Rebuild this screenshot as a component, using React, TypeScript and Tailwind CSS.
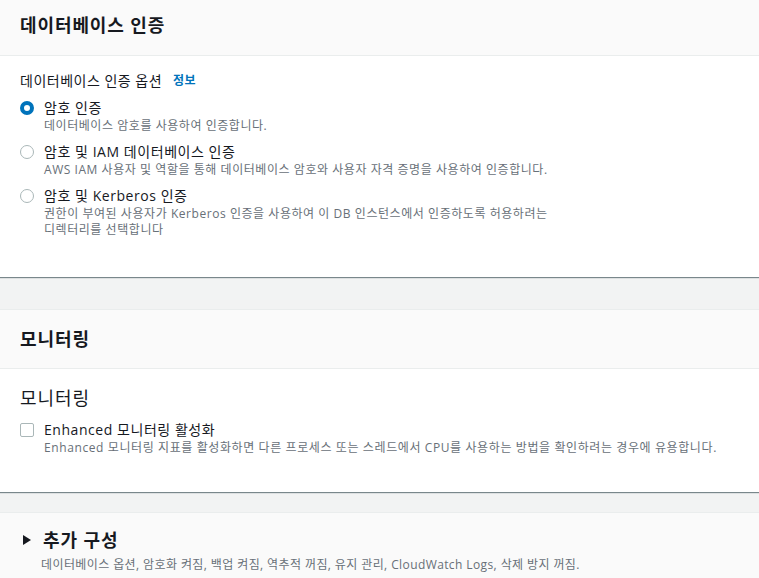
import React, { useState } from 'react';

const font = "font-['Open_Sans','Noto_Sans_CJK_KR',sans-serif]";

const options = [
  { id: 'password', label: '암호 인증', desc: ['데이터베이스 암호를 사용하여 인증합니다.'] },
  {
    id: 'iam',
    label: '암호 및 IAM 데이터베이스 인증',
    desc: ['AWS IAM 사용자 및 역할을 통해 데이터베이스 암호와 사용자 자격 증명을 사용하여 인증합니다.'],
  },
  {
    id: 'kerberos',
    label: '암호 및 Kerberos 인증',
    desc: ['권한이 부여된 사용자가 Kerberos 인증을 사용하여 이 DB 인스턴스에서 인증하도록 허용하려는', '디렉터리를 선택합니다'],
  },
];

const Radio: React.FC<{ checked: boolean }> = ({ checked }) =>
  checked ? (
    <span className="mt-[3px] block h-[14px] w-[14px] shrink-0 rounded-full border-[4px] border-[#0073bb] bg-white" />
  ) : (
    <span className="mt-[3px] block h-[14px] w-[14px] shrink-0 rounded-full border-[1.5px] border-[#aab7b8] bg-white" />
  );

const App: React.FC = () => {
  const [auth, setAuth] = useState('password');
  const [enhanced, setEnhanced] = useState(false);

  return (
    <div className={`min-h-screen bg-[#f2f3f3] text-[#16191f] ${font}`}>
      {/* Database authentication */}
      <section className="bg-white shadow-[0_1px_1px_0_rgba(0,28,36,0.5)]">
        <div className="bg-[#fafafa] border-b border-[#eaeded] px-5 pt-[14px] pb-[19px]">
          <h2 className="text-[18px] leading-[22px] font-bold tracking-[0.9px]">데이터베이스 인증</h2>
        </div>
        <div className="px-5 pt-[15px] pb-[39px]">
          <div className="flex items-center gap-[11px] text-[14px] leading-[20px] tracking-[0.5px]">
            <span>데이터베이스 인증 옵션</span>
            <span className="text-[12px] font-bold text-[#0073bb]">정보</span>
          </div>
          <div className="mt-[7px] flex flex-col gap-[8px]">
            {options.map((o) => (
              <label key={o.id} className="flex cursor-pointer gap-[10px]" onClick={() => setAuth(o.id)}>
                <Radio checked={auth === o.id} />
                <div>
                  <div className="text-[14px] leading-[20px] tracking-[0.55px]">{o.label}</div>
                  {o.desc.map((d) => (
                    <div key={d} className="text-[12px] leading-[16px] tracking-[0.55px] text-[#687078]">
                      {d}
                    </div>
                  ))}
                </div>
              </label>
            ))}
          </div>
        </div>
      </section>

      {/* Monitoring */}
      <section className="mt-[32px] bg-white border-t border-[#eaeded] shadow-[0_1px_1px_0_rgba(0,28,36,0.5)]">
        <div className="bg-[#fafafa] border-b border-[#eaeded] px-5 pt-[18px] pb-[18px]">
          <h2 className="text-[18px] leading-[22px] font-bold tracking-[0.9px]">모니터링</h2>
        </div>
        <div className="px-5 pt-[18px] pb-[36px]">
          <h3 className="text-[18px] leading-[22px] tracking-[0.9px]">모니터링</h3>
          <label className="mt-[11px] flex cursor-pointer gap-[10px]" onClick={() => setEnhanced(!enhanced)}>
            <span
              className={`mt-[3px] block h-[14px] w-[14px] shrink-0 rounded-[2px] border-[1.5px] ${
                enhanced ? 'border-[#0073bb] bg-[#0073bb]' : 'border-[#aab7b8] bg-white'
              }`}
            />
            <div>
              <div className="text-[14px] leading-[20px] tracking-[0.55px]">Enhanced 모니터링 활성화</div>
              <div className="text-[12px] leading-[16px] tracking-[0.6px] text-[#687078]">
                Enhanced 모니터링 지표를 활성화하면 다른 프로세스 또는 스레드에서 CPU를 사용하는 방법을 확인하려는 경우에 유용합니다.
              </div>
            </div>
          </label>
        </div>
      </section>

      {/* Additional configuration */}
      <section className="mt-[20px] bg-[#fafafa] border-t border-[#eaeded]">
        <div className="px-5 pt-[16px] pb-5">
          <div className="flex items-center gap-[11px]">
            <svg width="10" height="10" viewBox="0 0 10 10" className="ml-[2px]">
              <path d="M1 0 L9 5 L1 10 Z" fill="#16191f" />
            </svg>
            <h2 className="text-[18px] leading-[22px] font-bold tracking-[0.9px]">추가 구성</h2>
          </div>
          <div className="mt-[6px] pl-[21px] text-[12px] leading-[16px] tracking-[0.4px] text-[#687078]">
            데이터베이스 옵션, 암호화 켜짐, 백업 켜짐, 역추적 꺼짐, 유지 관리, CloudWatch Logs, 삭제 방지 꺼짐.
          </div>
        </div>
      </section>
    </div>
  );
};

export default App;
